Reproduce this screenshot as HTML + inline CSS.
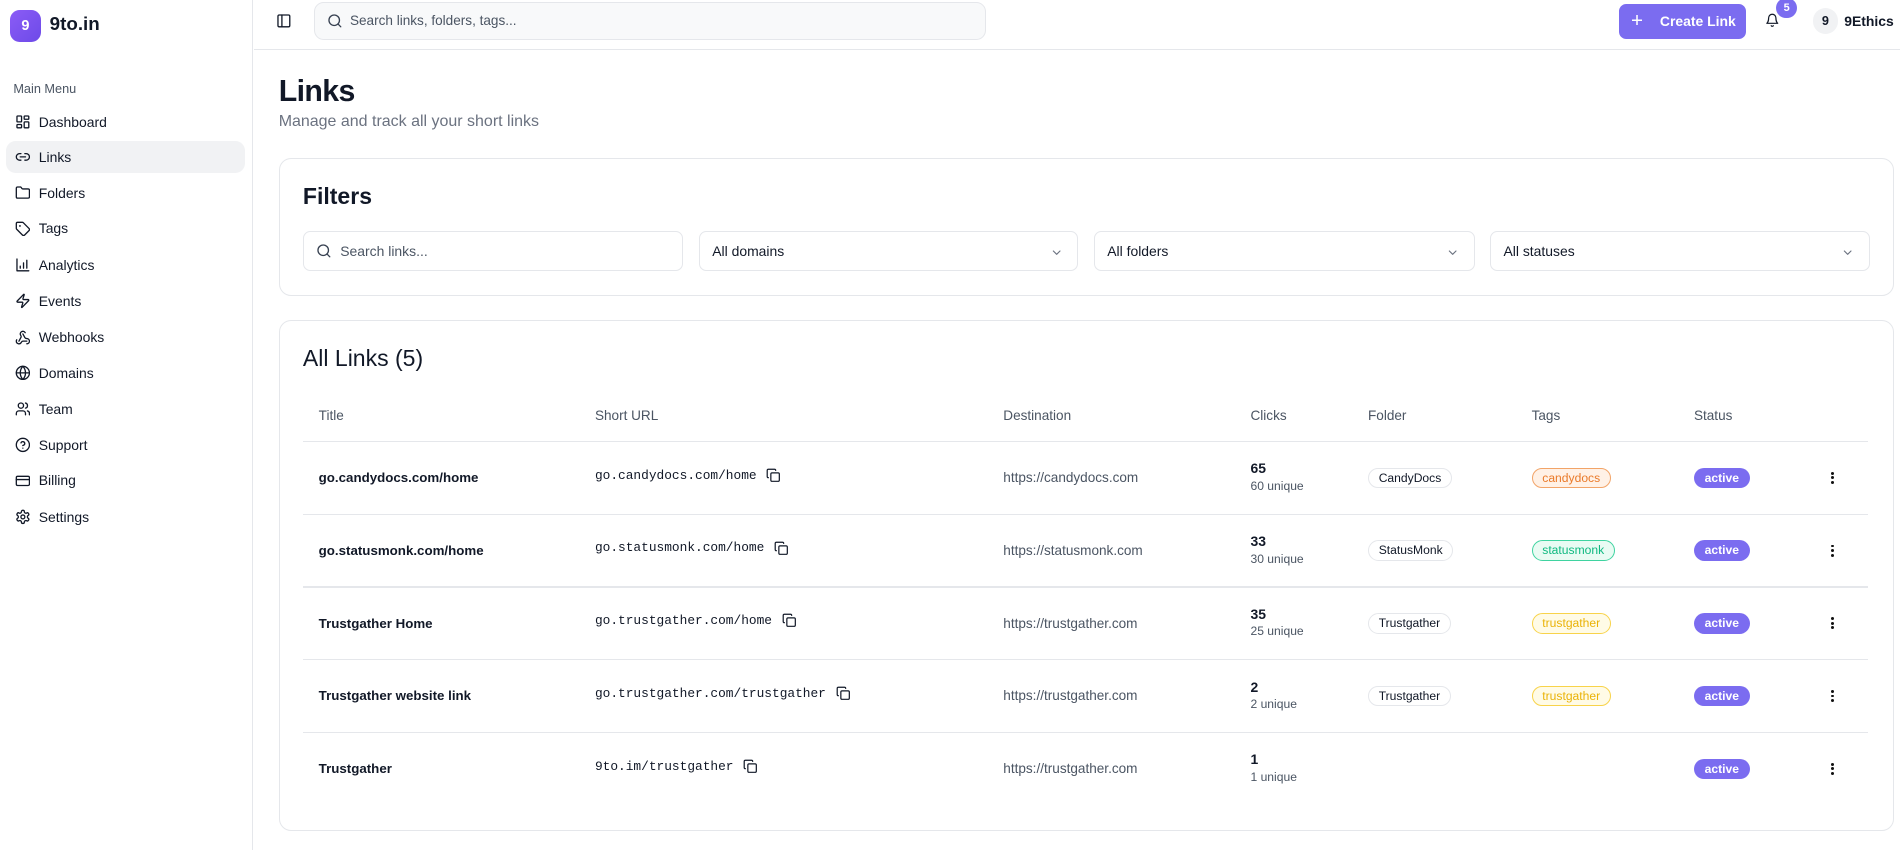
<!DOCTYPE html>
<html><head><meta charset="utf-8"><style>
*{box-sizing:border-box;margin:0;padding:0}
html,body{width:1900px;height:850px;overflow:hidden;background:#fff}
#root{zoom:1.2117;width:1568px;height:702px;position:relative;font-family:"Liberation Sans",sans-serif;color:#111827}
.abs{position:absolute}
svg.i{width:13px;height:13px;fill:none;stroke:#111827;stroke-width:2;stroke-linecap:round;stroke-linejoin:round}
.side{left:0;top:0;width:209px;height:702px;border-right:1px solid #e5e7eb}
.logo{left:8px;top:8px;width:26px;height:27px;border-radius:8px;background:linear-gradient(135deg,#8b5cf6,#6d4ae8);color:#fff;font-weight:700;font-size:12px;text-align:center;line-height:27px}
.brand{left:41px;top:11px;font-size:15.5px;font-weight:600}
.mm{left:11px;top:67px;font-size:10.5px;color:#4b5563}
.item{left:5px;width:197px;height:27px;border-radius:8px;display:flex;align-items:center;padding-left:7px;font-size:11.5px;color:#111827}
.item svg{margin-right:7px}
.item.act{background:#f1f2f4}
.hdr{left:210px;top:0;right:0;height:41px;border-bottom:1px solid #e5e7eb}
.srch{left:259px;top:2px;width:555px;height:31px;background:#f8f9fa;border:1px solid #e5e7eb;border-radius:8px}
.card{border:1px solid #e5e7eb;border-radius:10px;left:230px;width:1333px}
.inp{top:191px;height:33px;border:1px solid #e5e7eb;border-radius:6px;font-size:11.5px;display:flex;align-items:center;padding-left:10px;color:#111827}
.inp .chev{position:absolute;right:12px;top:11px}
.th{top:337px;font-size:11.2px;color:#4b5563}
.line{left:250px;width:1292px;height:1px;background:#e5e7eb}
.t{font-size:11px;font-weight:700}
.mono{font-family:"Liberation Mono",monospace;font-size:10.6px;display:flex;align-items:center}
.mono svg{margin-left:8px;width:12px;height:12px}
.dst{font-size:11.2px;color:#4b5563}
.cn{font-size:11.5px;font-weight:700}
.cu{font-size:10px;color:#4b5563;margin-top:2px}
.pill{height:17px;border-radius:9px;border:1px solid #e5e7eb;font-size:10px;line-height:15px;padding:0 8px;white-space:nowrap}
.st{background:#7b6cf0;color:#fff;font-weight:700;border:none;line-height:17px;width:46px;text-align:center;padding:0}
.dots{width:3px}
.dots i{display:block;width:2.4px;height:2.4px;background:#111;border-radius:2px;margin:1.4px 0}
</style></head><body><div id="root">
<div class="abs side">
<div class="abs logo">9</div>
<div class="abs brand">9to.in</div>
<div class="abs mm">Main Menu</div>
<div class="abs item" style="top:87px"><svg class="i" viewBox="0 0 24 24"><rect x="3" y="3" width="7" height="9" rx="1"/><rect x="14" y="3" width="7" height="5" rx="1"/><rect x="14" y="12" width="7" height="9" rx="1"/><rect x="3" y="16" width="7" height="5" rx="1"/></svg>Dashboard</div>
<div class="abs item act" style="top:116px"><svg class="i" viewBox="0 0 24 24"><path d="M9 17H7A5 5 0 0 1 7 7h2M15 7h2a5 5 0 1 1 0 10h-2M8 12h8"/></svg>Links</div>
<div class="abs item" style="top:146px"><svg class="i" viewBox="0 0 24 24"><path d="M20 20a2 2 0 0 0 2-2V8a2 2 0 0 0-2-2h-7.9a2 2 0 0 1-1.7-.9l-.8-1.2A2 2 0 0 0 7.9 3H4a2 2 0 0 0-2 2v13a2 2 0 0 0 2 2Z"/></svg>Folders</div>
<div class="abs item" style="top:175px"><svg class="i" viewBox="0 0 24 24"><path d="M12.6 2.6A2 2 0 0 0 11.2 2H4a2 2 0 0 0-2 2v7.2a2 2 0 0 0 .6 1.4l8.7 8.7a2.4 2.4 0 0 0 3.4 0l6.6-6.6a2.4 2.4 0 0 0 0-3.4z"/><circle cx="7.5" cy="7.5" r=".5"/></svg>Tags</div>
<div class="abs item" style="top:205px"><svg class="i" viewBox="0 0 24 24"><path d="M3 3v18h18M13 17V9M18 17V5M8 17v-3"/></svg>Analytics</div>
<div class="abs item" style="top:235px"><svg class="i" viewBox="0 0 24 24"><path d="M4 14a1 1 0 0 1-.8-1.6l9.9-10.2a.5.5 0 0 1 .9.5l-1.9 6A1 1 0 0 0 13 10h7a1 1 0 0 1 .8 1.6l-9.9 10.2a.5.5 0 0 1-.9-.5l1.9-6A1 1 0 0 0 11 14z"/></svg>Events</div>
<div class="abs item" style="top:265px"><svg class="i" viewBox="0 0 24 24"><path d="M18 16.98h-5.99c-1.1 0-1.95.94-2.48 1.9A4 4 0 0 1 2 17c.01-.7.2-1.4.57-2M6 17l3.130-5.78c.53-.97.1-2.18-.5-3.1a4 4 0 1 1 6.89-4.06M12 6l3.13 5.73C15.66 12.7 16.9 13 18 13a4 4 0 0 1 0 8"/></svg>Webhooks</div>
<div class="abs item" style="top:294px"><svg class="i" viewBox="0 0 24 24"><circle cx="12" cy="12" r="10"/><path d="M12 2a14.5 14.5 0 0 0 0 20 14.5 14.5 0 0 0 0-20M2 12h20"/></svg>Domains</div>
<div class="abs item" style="top:324px"><svg class="i" viewBox="0 0 24 24"><path d="M16 21v-2a4 4 0 0 0-4-4H6a4 4 0 0 0-4 4v2"/><circle cx="9" cy="7" r="4"/><path d="M22 21v-2a4 4 0 0 0-3-3.87M16 3.13a4 4 0 0 1 0 7.75"/></svg>Team</div>
<div class="abs item" style="top:354px"><svg class="i" viewBox="0 0 24 24"><circle cx="12" cy="12" r="10"/><path d="M9.1 9a3 3 0 0 1 5.8 1c0 2-3 3-3 3M12 17h.01"/></svg>Support</div>
<div class="abs item" style="top:383px"><svg class="i" viewBox="0 0 24 24"><rect x="2" y="5" width="20" height="14" rx="2"/><path d="M2 10h20"/></svg>Billing</div>
<div class="abs item" style="top:413px"><svg class="i" viewBox="0 0 24 24"><path d="M12.22 2h-.44a2 2 0 0 0-2 2v.18a2 2 0 0 1-1 1.73l-.43.25a2 2 0 0 1-2 0l-.15-.08a2 2 0 0 0-2.73.73l-.22.38a2 2 0 0 0 .73 2.73l.15.1a2 2 0 0 1 1 1.72v.51a2 2 0 0 1-1 1.74l-.15.09a2 2 0 0 0-.73 2.730l.22.38a2 2 0 0 0 2.73.73l.15-.08a2 2 0 0 1 2 0l.43.25a2 2 0 0 1 1 1.73V20a2 2 0 0 0 2 2h.44a2 2 0 0 0 2-2v-.18a2 2 0 0 1 1-1.73l.43-.25a2 2 0 0 1 2 0l.15.08a2 2 0 0 0 2.73-.73l.22-.39a2 2 0 0 0-.73-2.73l-.15-.08a2 2 0 0 1-1-1.74v-.5a2 2 0 0 1 1-1.74l.15-.09a2 2 0 0 0 .73-2.73l-.22-.38a2 2 0 0 0-2.73-.73l-.15.08a2 2 0 0 1-2 0l-.43-.25a2 2 0 0 1-1-1.73V4a2 2 0 0 0-2-2z"/><circle cx="12" cy="12" r="3"/></svg>Settings</div>
</div>
<div class="abs hdr"></div>
<svg class="i abs" style="left:228px;top:11px" viewBox="0 0 24 24"><rect x="3" y="3" width="18" height="18" rx="2"/><path d="M9 3v18"/></svg>
<div class="abs srch"><svg class="i abs" style="left:10px;top:8px;stroke:#374151" viewBox="0 0 24 24"><circle cx="11" cy="11" r="8"/><path d="m21 21-4.3-4.3"/></svg><span class="abs" style="left:29px;top:8px;font-size:11.2px;color:#4b5563">Search links, folders, tags...</span></div>
<div class="abs" style="left:1336px;top:3px;width:105px;height:29px;background:#7b6cf0;border-radius:6px;color:#fff;font-size:11.5px;font-weight:700;display:flex;align-items:center"><span style="font-size:17px;font-weight:400;margin-left:10px;margin-right:14px">+</span>Create Link</div>
<svg class="i abs" style="left:1457px;top:11px;width:12px;height:12px" viewBox="0 0 24 24"><path d="M6 8a6 6 0 0 1 12 0c0 7 3 9 3 9H3s3-2 3-9M10.3 21a1.94 1.94 0 0 0 3.4 0"/></svg>
<div class="abs" style="left:1466px;top:-2px;width:17px;height:17px;border-radius:50%;background:#7b6cf0;color:#fff;font-size:9px;font-weight:700;text-align:center;line-height:17px">5</div>
<div class="abs" style="left:1496px;top:7px;width:21px;height:21px;border-radius:50%;background:#f1f2f4;font-size:10.5px;font-weight:700;text-align:center;line-height:21px">9</div>
<div class="abs" style="left:1522px;top:11px;font-size:11.5px;font-weight:700">9Ethics</div>

<div class="abs" style="left:230px;top:62px;font-size:25px;font-weight:700;letter-spacing:-0.5px">Links</div>
<div class="abs" style="left:230px;top:93px;font-size:13.2px;color:#6b7280">Manage and track all your short links</div>

<div class="abs card" style="top:130px;height:114px"></div>
<div class="abs" style="left:250px;top:151px;font-size:19px;font-weight:600">Filters</div>
<div class="abs inp" style="left:250px;width:314px;padding-left:30px;color:#4b5563"><svg class="i abs" style="left:10px;top:9px;stroke:#374151" viewBox="0 0 24 24"><circle cx="11" cy="11" r="8"/><path d="m21 21-4.3-4.3"/></svg>Search links...</div>
<div class="abs inp" style="left:577px;width:313px">All domains<svg class="i chev" style="stroke:#6b7280;width:11px;height:11px" viewBox="0 0 24 24"><path d="m6 9 6 6 6-6"/></svg></div>
<div class="abs inp" style="left:903px;width:314px">All folders<svg class="i chev" style="stroke:#6b7280;width:11px;height:11px" viewBox="0 0 24 24"><path d="m6 9 6 6 6-6"/></svg></div>
<div class="abs inp" style="left:1230px;width:313px">All statuses<svg class="i chev" style="stroke:#6b7280;width:11px;height:11px" viewBox="0 0 24 24"><path d="m6 9 6 6 6-6"/></svg></div>

<div class="abs card" style="top:264px;height:422px"></div>
<div class="abs" style="left:250px;top:285px;font-size:19px;font-weight:500">All Links (5)</div>
<div class="abs th" style="left:263px">Title</div>
<div class="abs th" style="left:491px">Short URL</div>
<div class="abs th" style="left:828px">Destination</div>
<div class="abs th" style="left:1032px">Clicks</div>
<div class="abs th" style="left:1129px">Folder</div>
<div class="abs th" style="left:1264px">Tags</div>
<div class="abs th" style="left:1398px">Status</div>
<div class="abs line" style="top:364px"></div>
<div class="abs line" style="top:424px"></div>
<div class="abs line" style="top:484px"></div>
<div class="abs line" style="top:544px"></div>
<div class="abs line" style="top:604px"></div>

<div class="abs t" style="left:263px;top:388px">go.candydocs.com/home</div>
<div class="abs mono" style="left:491px;top:386px">go.candydocs.com/home<svg class="i" viewBox="0 0 24 24"><rect x="8" y="8" width="14" height="14" rx="2"/><path d="M4 16c-1.1 0-2-.9-2-2V4c0-1.1.9-2 2-2h10c1.1 0 2 .9 2 2"/></svg></div>
<div class="abs dst" style="left:828px;top:388px">https://candydocs.com</div>
<div class="abs" style="left:1032px;top:380px"><div class="cn">65</div><div class="cu">60 unique</div></div>
<div class="abs pill" style="left:1129px;top:386px">CandyDocs</div>
<div class="abs pill" style="left:1264px;top:386px;background:#fff1e6;border-color:#f2a468;color:#ea7a2a">candydocs</div>
<div class="abs pill st" style="left:1398px;top:386px">active</div>
<div class="abs dots" style="left:1511px;top:388px"><i></i><i></i><i></i></div>

<div class="abs t" style="left:263px;top:448px">go.statusmonk.com/home</div>
<div class="abs mono" style="left:491px;top:446px">go.statusmonk.com/home<svg class="i" viewBox="0 0 24 24"><rect x="8" y="8" width="14" height="14" rx="2"/><path d="M4 16c-1.1 0-2-.9-2-2V4c0-1.1.9-2 2-2h10c1.1 0 2 .9 2 2"/></svg></div>
<div class="abs dst" style="left:828px;top:448px">https://statusmonk.com</div>
<div class="abs" style="left:1032px;top:440px"><div class="cn">33</div><div class="cu">30 unique</div></div>
<div class="abs pill" style="left:1129px;top:446px">StatusMonk</div>
<div class="abs pill" style="left:1264px;top:446px;background:#e9fbf3;border-color:#3fd3a0;color:#10b981">statusmonk</div>
<div class="abs pill st" style="left:1398px;top:446px">active</div>
<div class="abs dots" style="left:1511px;top:448px"><i></i><i></i><i></i></div>

<div class="abs t" style="left:263px;top:508px">Trustgather Home</div>
<div class="abs mono" style="left:491px;top:506px">go.trustgather.com/home<svg class="i" viewBox="0 0 24 24"><rect x="8" y="8" width="14" height="14" rx="2"/><path d="M4 16c-1.1 0-2-.9-2-2V4c0-1.1.9-2 2-2h10c1.1 0 2 .9 2 2"/></svg></div>
<div class="abs dst" style="left:828px;top:508px">https://trustgather.com</div>
<div class="abs" style="left:1032px;top:500px"><div class="cn">35</div><div class="cu">25 unique</div></div>
<div class="abs pill" style="left:1129px;top:506px">Trustgather</div>
<div class="abs pill" style="left:1264px;top:506px;background:#fffbe6;border-color:#f8d34a;color:#eab308">trustgather</div>
<div class="abs pill st" style="left:1398px;top:506px">active</div>
<div class="abs dots" style="left:1511px;top:508px"><i></i><i></i><i></i></div>

<div class="abs t" style="left:263px;top:568px">Trustgather website link</div>
<div class="abs mono" style="left:491px;top:566px">go.trustgather.com/trustgather<svg class="i" viewBox="0 0 24 24"><rect x="8" y="8" width="14" height="14" rx="2"/><path d="M4 16c-1.1 0-2-.9-2-2V4c0-1.1.9-2 2-2h10c1.1 0 2 .9 2 2"/></svg></div>
<div class="abs dst" style="left:828px;top:568px">https://trustgather.com</div>
<div class="abs" style="left:1032px;top:560px"><div class="cn">2</div><div class="cu">2 unique</div></div>
<div class="abs pill" style="left:1129px;top:566px">Trustgather</div>
<div class="abs pill" style="left:1264px;top:566px;background:#fffbe6;border-color:#f8d34a;color:#eab308">trustgather</div>
<div class="abs pill st" style="left:1398px;top:566px">active</div>
<div class="abs dots" style="left:1511px;top:568px"><i></i><i></i><i></i></div>

<div class="abs t" style="left:263px;top:628px">Trustgather</div>
<div class="abs mono" style="left:491px;top:626px">9to.im/trustgather<svg class="i" viewBox="0 0 24 24"><rect x="8" y="8" width="14" height="14" rx="2"/><path d="M4 16c-1.1 0-2-.9-2-2V4c0-1.1.9-2 2-2h10c1.1 0 2 .9 2 2"/></svg></div>
<div class="abs dst" style="left:828px;top:628px">https://trustgather.com</div>
<div class="abs" style="left:1032px;top:620px"><div class="cn">1</div><div class="cu">1 unique</div></div>
<div class="abs pill st" style="left:1398px;top:626px">active</div>
<div class="abs dots" style="left:1511px;top:628px"><i></i><i></i><i></i></div>
</div></body></html>
